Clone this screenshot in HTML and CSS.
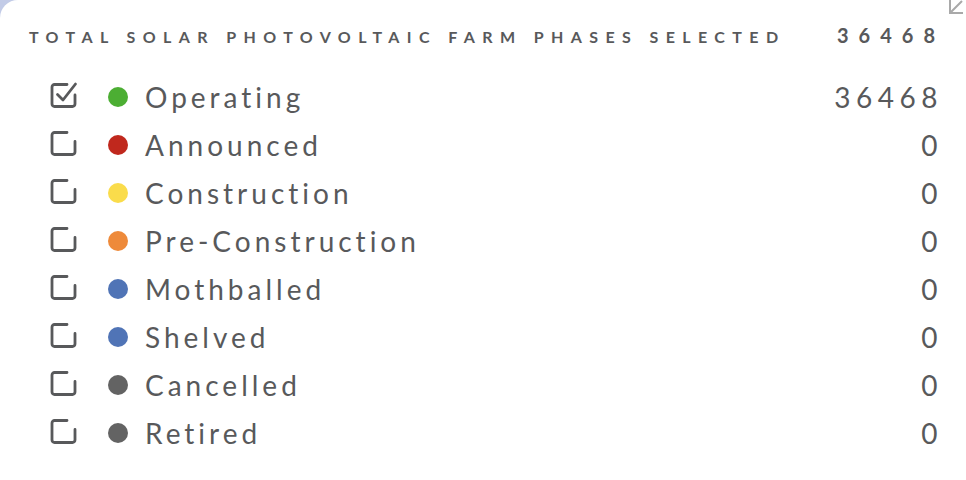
FILE: index.html
```html
<!DOCTYPE html>
<html>
<head>
<meta charset="utf-8">
<link rel="stylesheet" href="styles.css">
</head>
<body>
<div class="card">
  <svg class="collapse" width="16" height="16" viewBox="0 0 16 16"><path d="M2 1 V14 H15 M2 14 L14 2" fill="none" stroke="#a9a9a9" stroke-width="2"/></svg>
  <div class="header">
    <span class="title">TOTAL SOLAR PHOTOVOLTAIC FARM PHASES SELECTED</span>
    <span class="total">36468</span>
  </div>
  <ul class="list">
    <li class="row"><svg class="cb" viewBox="0 0 28 28"><path d="M17 1.5 H4.5 a2.5 2.5 0 0 0 -2.5 2.5 V21 a2.5 2.5 0 0 0 2.5 2.5 H22.5 a2.5 2.5 0 0 0 2.5 -2.5 V12"/><path d="M7.5 11.5 L13 17 L25.5 1"/></svg><span class="dot green"></span><span class="label">Operating</span><span class="num">36468</span></li>
    <li class="row"><svg class="cb" viewBox="0 0 28 28"><path d="M17 1.5 H4.5 a2.5 2.5 0 0 0 -2.5 2.5 V21 a2.5 2.5 0 0 0 2.5 2.5 H22.5 a2.5 2.5 0 0 0 2.5 -2.5 V10.5"/></svg><span class="dot red"></span><span class="label">Announced</span><span class="num">0</span></li>
    <li class="row"><svg class="cb" viewBox="0 0 28 28"><path d="M17 1.5 H4.5 a2.5 2.5 0 0 0 -2.5 2.5 V21 a2.5 2.5 0 0 0 2.5 2.5 H22.5 a2.5 2.5 0 0 0 2.5 -2.5 V10.5"/></svg><span class="dot yellow"></span><span class="label">Construction</span><span class="num">0</span></li>
    <li class="row"><svg class="cb" viewBox="0 0 28 28"><path d="M17 1.5 H4.5 a2.5 2.5 0 0 0 -2.5 2.5 V21 a2.5 2.5 0 0 0 2.5 2.5 H22.5 a2.5 2.5 0 0 0 2.5 -2.5 V10.5"/></svg><span class="dot orange"></span><span class="label">Pre-Construction</span><span class="num">0</span></li>
    <li class="row"><svg class="cb" viewBox="0 0 28 28"><path d="M17 1.5 H4.5 a2.5 2.5 0 0 0 -2.5 2.5 V21 a2.5 2.5 0 0 0 2.5 2.5 H22.5 a2.5 2.5 0 0 0 2.5 -2.5 V10.5"/></svg><span class="dot blue"></span><span class="label">Mothballed</span><span class="num">0</span></li>
    <li class="row"><svg class="cb" viewBox="0 0 28 28"><path d="M17 1.5 H4.5 a2.5 2.5 0 0 0 -2.5 2.5 V21 a2.5 2.5 0 0 0 2.5 2.5 H22.5 a2.5 2.5 0 0 0 2.5 -2.5 V10.5"/></svg><span class="dot blue"></span><span class="label">Shelved</span><span class="num">0</span></li>
    <li class="row"><svg class="cb" viewBox="0 0 28 28"><path d="M17 1.5 H4.5 a2.5 2.5 0 0 0 -2.5 2.5 V21 a2.5 2.5 0 0 0 2.5 2.5 H22.5 a2.5 2.5 0 0 0 2.5 -2.5 V10.5"/></svg><span class="dot gray"></span><span class="label">Cancelled</span><span class="num">0</span></li>
    <li class="row"><svg class="cb" viewBox="0 0 28 28"><path d="M17 1.5 H4.5 a2.5 2.5 0 0 0 -2.5 2.5 V21 a2.5 2.5 0 0 0 2.5 2.5 H22.5 a2.5 2.5 0 0 0 2.5 -2.5 V10.5"/></svg><span class="dot gray"></span><span class="label">Retired</span><span class="num">0</span></li>
  </ul>
</div>
</body>
</html>
```

FILE: styles.css
```css
html, body {
  margin: 0;
  padding: 0;
  height: 100%;
  overflow: hidden;
}
body {
  background: #c2cbe7;
  font-family: "Lato", "Open Sans", sans-serif;
  color: #58595b;
}
.card {
  position: relative;
  background: #ffffff;
  border-top-left-radius: 18px;
  height: 100%;
  box-sizing: border-box;
  padding: 23px 28px 0 29px;
}
.collapse {
  position: absolute;
  top: -1px;
  right: 2px;
}
.header {
  display: flex;
  justify-content: space-between;
  align-items: baseline;
  height: 50px;
}
.title {
  font-size: 16px;
  font-weight: 700;
  letter-spacing: 7.4px;
}
.total {
  font-size: 20px;
  font-weight: 700;
  letter-spacing: 10px;
  margin-right: -7px;
}
.list {
  list-style: none;
  margin: 0;
  padding: 0 0 0 21px;
}
.row {
  display: flex;
  align-items: center;
  height: 48px;
}
.cb {
  width: 28px;
  height: 28px;
  overflow: visible;
  fill: none;
  stroke: #58595b;
  stroke-width: 2.8;
  stroke-linecap: round;
  stroke-linejoin: round;
  margin-right: 30px;
}
.dot {
  width: 20px;
  height: 20px;
  border-radius: 50%;
  margin-right: 17px;
}
.green { background: #4cae33; }
.red { background: #c0281d; }
.yellow { background: #fadc4b; }
.orange { background: #ee8a3a; }
.blue { background: #5074b6; }
.gray { background: #636363; }
.label {
  font-size: 28px;
  letter-spacing: 4px;
  flex: 1;
}
.num {
  font-size: 28px;
  letter-spacing: 5.5px;
  margin-right: -5px;
}
```
